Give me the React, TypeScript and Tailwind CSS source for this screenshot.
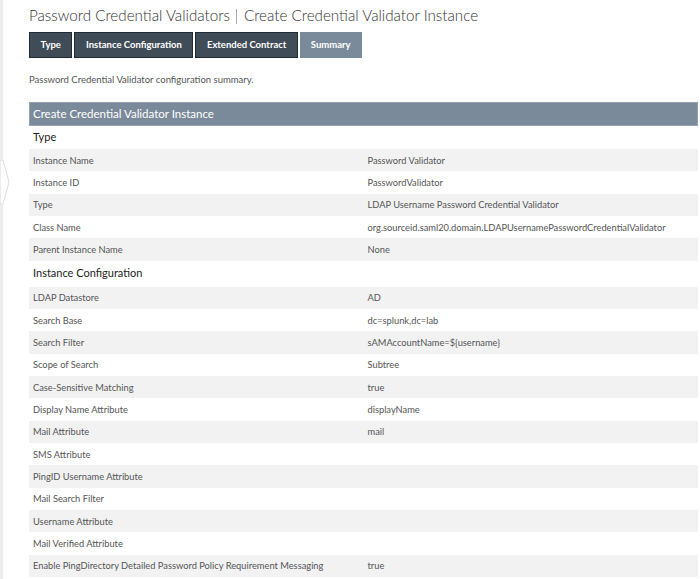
import React from 'react';

type Row = { label: string; value?: string };

const typeRows: Row[] = [
    { label: 'Instance Name', value: 'Password Validator' },
    { label: 'Instance ID', value: 'PasswordValidator' },
    { label: 'Type', value: 'LDAP Username Password Credential Validator' },
    { label: 'Class Name', value: 'org.sourceid.saml20.domain.LDAPUsernamePasswordCredentialValidator' },
    { label: 'Parent Instance Name', value: 'None' },
];

const configRows: Row[] = [
    { label: 'LDAP Datastore', value: 'AD' },
    { label: 'Search Base', value: 'dc=splunk,dc=lab' },
    { label: 'Search Filter', value: 'sAMAccountName=${username}' },
    { label: 'Scope of Search', value: 'Subtree' },
    { label: 'Case-Sensitive Matching', value: 'true' },
    { label: 'Display Name Attribute', value: 'displayName' },
    { label: 'Mail Attribute', value: 'mail' },
    { label: 'SMS Attribute' },
    { label: 'PingID Username Attribute' },
    { label: 'Mail Search Filter' },
    { label: 'Username Attribute' },
    { label: 'Mail Verified Attribute' },
    { label: 'Enable PingDirectory Detailed Password Policy Requirement Messaging', value: 'true' },
];

const tabs = ['Type', 'Instance Configuration', 'Extended Contract', 'Summary'];

function SummaryRows({ rows }: { rows: Row[] }) {
    return (
        <>
            {rows.map((row, i) => (
                <div
                    key={row.label}
                    className={`grid grid-cols-2 h-[22.33px] items-center pt-px text-[9.3px] text-[#555] ${i % 2 === 0 ? 'bg-[#f2f2f3]' : 'bg-white'}`}
                >
                    <span className="pl-[4px] whitespace-nowrap">{row.label}</span>
                    <span className="pl-[4px] whitespace-nowrap">{row.value}</span>
                </div>
            ))}
        </>
    );
}

export default function App() {
    return (
        <div className="flex w-[700px] h-[579px] overflow-hidden bg-white font-['Lato',sans-serif]">
            {/* collapsed side nav edge */}
            <div className="relative w-[3px] shrink-0 bg-[#ececed]">
                <svg className="absolute left-0 top-[160px]" width="10" height="44" viewBox="0 0 10 44">
                    <polygon points="0,0 3,0 9,22 3,44 0,44" fill="#fff" stroke="#dcdcdc" strokeWidth="1" />
                </svg>
            </div>

            <div className="flex-1 pl-[26px] pr-[2px] pt-[5px]">
                <h1 className="text-[15.2px] leading-[20px] text-[#333] font-light whitespace-nowrap">
                    Password Credential Validators
                    <span className="inline-block w-px h-[15px] bg-[#aaa] ml-[6px] mr-[7px] align-[-3px]" />
                    Create Credential Validator Instance
                </h1>

                <div className="flex gap-[2px] mt-[7px]">
                    {tabs.map((t) => (
                        <div
                            key={t}
                            className={`h-[26px] flex items-center text-[9.5px] font-bold text-white ${
                                t === 'Summary'
                                    ? 'bg-[#7b8a9a] px-[11px]'
                                    : 'bg-[#404c57] border border-[#1f2a33] px-[10.5px]'
                            }`}
                        >
                            {t}
                        </div>
                    ))}
                </div>

                <p className="mt-[15px] text-[9.5px] leading-[14px] text-[#555]">
                    Password Credential Validator configuration summary.
                </p>

                <div className="mt-[15px]">
                    <div className="h-[24px] flex items-center pl-[3px] bg-[#7b8a9a] border border-[#95a2af] text-white text-[11.5px]">
                        Create Credential Validator Instance
                    </div>
                    <div className="h-[23px] flex items-center pl-[4px] text-[11px] text-[#222]">Type</div>
                    <SummaryRows rows={typeRows} />
                    <div className="h-[26px] flex items-center pl-[4px] text-[11px] text-[#222]">Instance Configuration</div>
                    <SummaryRows rows={configRows} />
                </div>
            </div>
        </div>
    );
}
